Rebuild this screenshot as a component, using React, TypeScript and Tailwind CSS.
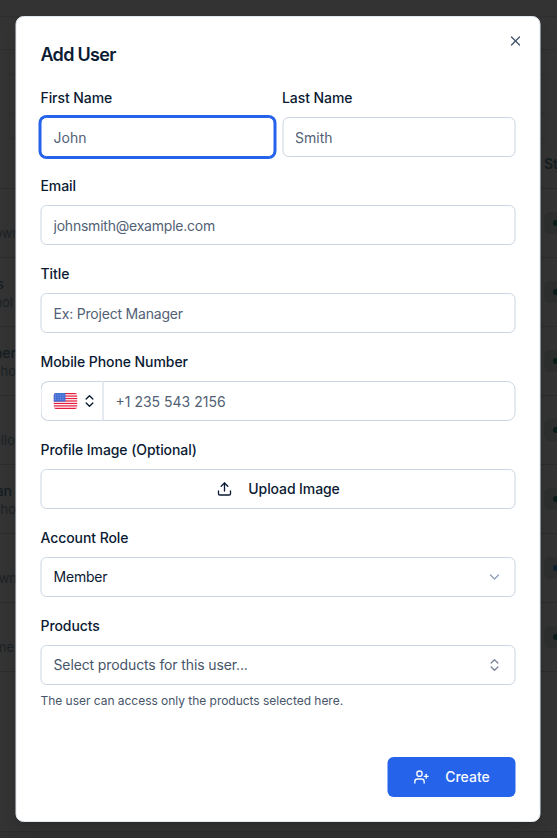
import type { ReactNode } from 'react';
import { ChevronDown, ChevronsUpDown, Upload, UserPlus, X } from 'lucide-react';

interface Row {
  name: string;
  nameOffset: string;
  email: string;
  emailOffset: string;
  dot: string;
}

const rows: Row[] = [
  { name: '', nameOffset: '', email: 'own', emailOffset: '-mr-1', dot: 'bg-[#0b1d1a]' },
  { name: 's', nameOffset: 'mr-3', email: 'nol', emailOffset: 'mr-[3px]', dot: 'bg-[#0b1d1a]' },
  { name: 'ner', nameOffset: 'mr-0', email: 'pho', emailOffset: 'mr-0', dot: 'bg-[#0b1d1a]' },
  { name: '', nameOffset: '', email: 'ollo', emailOffset: 'mr-px', dot: 'bg-[#0b1d1a]' },
  { name: 'an', nameOffset: 'mr-1', email: 'eho', emailOffset: 'mr-0', dot: 'bg-[#0b1d1a]' },
  { name: '', nameOffset: '', email: 'own', emailOffset: '-mr-px', dot: 'bg-[#0d1f2d]' },
  { name: '', nameOffset: '', email: 'me', emailOffset: 'mr-0.5', dot: 'bg-[#0b1d1a]' },
];

const inputClass =
  'block h-10 w-full rounded-md border bg-white px-3 text-sm outline-none placeholder:text-[#526175]';

function Field({ label, children }: { label: string; children: ReactNode }) {
  return (
    <div>
      <div className="mb-2.5 flex h-[18px] items-center text-sm font-medium tracking-[-0.08px]">{label}</div>
      {children}
    </div>
  );
}

function UsFlag() {
  return (
    <svg className="h-4 w-6 rounded-[3px]" viewBox="0 0 24 16" preserveAspectRatio="none">
      <rect width="24" height="16" fill="#fff" />
      {[0, 1, 2, 3, 4, 5, 6].map(i => (
        <rect key={i} y={i * 2.46} width="24" height="1.23" fill="#e31d3c" />
      ))}
      <rect width="12" height="8.6" fill="#466fd5" />
      {[2, 4.3, 6.6].map(y =>
        [2, 4.5, 7, 9.5].map(x => <circle key={`${x}-${y}`} cx={x} cy={y} r="0.4" fill="#d5e0fa" />)
      )}
    </svg>
  );
}

function UsersPage() {
  return (
    <div className="h-full bg-[#333333] text-[#141d20]">
      <div className="h-[17px] border-b border-[#2e2e2e]" />
      <div className="h-[33px] border-b border-[#2e2e2e]" />
      <div className="mr-[11px] ml-[9px] h-[89px] border-x border-[#303030]">
        <div className="h-[25px] border-b border-[#2e2e2e]" />
        <div className="h-[39px] border-b border-[#2e2e2e]" />
        <div className="h-[25px] border-b border-[#2e2e2e]" />
      </div>
      <div className="flex h-[50px] items-center justify-end overflow-hidden border-b border-[#2c2c2c]">
        <div className="w-[13px] text-sm font-semibold">Status</div>
      </div>
      {rows.map((row, i) => (
        <div key={i} className="flex h-[69px] items-center justify-between overflow-hidden border-b border-[#2c2c2c]">
          <div className="flex w-4 flex-col items-end pt-[3px]">
            <div className={`h-4 text-sm leading-4 font-medium ${row.nameOffset}`}>{row.name}</div>
            <div className={`h-5 text-[13px] leading-5 text-[#1b2225] ${row.emailOffset}`}>{row.email}</div>
          </div>
          <div className="flex h-[22px] w-[13px] items-center justify-end rounded-l-md bg-[#2d2f2f]">
            <div className={`h-1.5 w-1 rounded-l-full ${row.dot}`} />
          </div>
        </div>
      ))}
      <div className="h-[160px] border-b border-[#2c2c2c]" />
      <div className="h-[6px] bg-[#303030]" />
    </div>
  );
}

export default function App() {
  return (
    <div className="relative h-[838px] w-full overflow-hidden font-['Inter',sans-serif] text-[#0b1b33]">
      <UsersPage />

      <div className="absolute inset-0 flex items-start justify-center pt-4">
        <div className="relative h-[806px] w-[525px] -translate-x-[0.5px] rounded-lg border border-slate-200 bg-white p-6 shadow-lg">
          <h2 className="mt-[5px] text-lg leading-[18px] font-semibold tracking-[-0.7px]">Add User</h2>
          <button className="absolute top-4 right-4 text-slate-600">
            <X className="size-4" strokeWidth={2} />
          </button>

          <form className="mt-[25px] flex flex-col gap-5">
            <div className="grid grid-cols-2 gap-2">
              <Field label="First Name">
                <input className={`${inputClass} border-[#2563eb] ring-2 ring-[#2563eb]`} placeholder="John" />
              </Field>
              <Field label="Last Name">
                <input className={`${inputClass} border-slate-300`} placeholder="Smith" />
              </Field>
            </div>
            <Field label="Email">
              <input
                className={`${inputClass} border-slate-300 tracking-[-0.22px]`}
                placeholder="johnsmith@example.com"
              />
            </Field>
            <Field label="Title">
              <input
                className={`${inputClass} border-slate-300 tracking-[-0.2px]`}
                placeholder="Ex: Project Manager"
              />
            </Field>
            <Field label="Mobile Phone Number">
              <div className="flex">
                <button
                  type="button"
                  className="flex h-10 w-[62px] items-center gap-1 rounded-l-lg border border-r-0 border-slate-300 pl-3"
                >
                  <UsFlag />
                  <ChevronsUpDown className="size-4" />
                </button>
                <input
                  className="h-10 min-w-0 flex-1 rounded-r-lg border border-slate-300 px-3 text-sm outline-none placeholder:text-[#526175]"
                  placeholder="+1 235 543 2156"
                />
              </div>
            </Field>
            <Field label="Profile Image (Optional)">
              <button
                type="button"
                className="flex h-10 w-full items-center justify-center gap-4 rounded-md border border-slate-300 text-sm font-medium tracking-[-0.1px]"
              >
                <Upload className="size-4" />
                Upload Image
              </button>
            </Field>
            <Field label="Account Role">
              <button
                type="button"
                className="flex h-10 w-full items-center justify-between rounded-md border border-slate-300 px-3 text-sm tracking-[-0.2px]"
              >
                Member
                <ChevronDown className="size-4 text-slate-400" />
              </button>
            </Field>
            <Field label="Products">
              <button
                type="button"
                className="flex h-10 w-full items-center justify-between rounded-md border border-slate-300 px-3 text-sm tracking-[-0.12px] text-[#475569]"
              >
                Select products for this user...
                <ChevronsUpDown className="size-4 text-[#7d8694]" />
              </button>
              <p className="mt-2 text-xs tracking-[-0.03px] text-[#475569]">
                The user can access only the products selected here.
              </p>
            </Field>
          </form>

          <div className="mt-12 flex justify-end">
            <button className="flex h-10 w-32 items-center justify-center gap-4 rounded-md bg-[#2563eb] text-sm font-medium text-slate-50">
              <UserPlus className="size-4" />
              Create
            </button>
          </div>
        </div>
      </div>
    </div>
  );
}
